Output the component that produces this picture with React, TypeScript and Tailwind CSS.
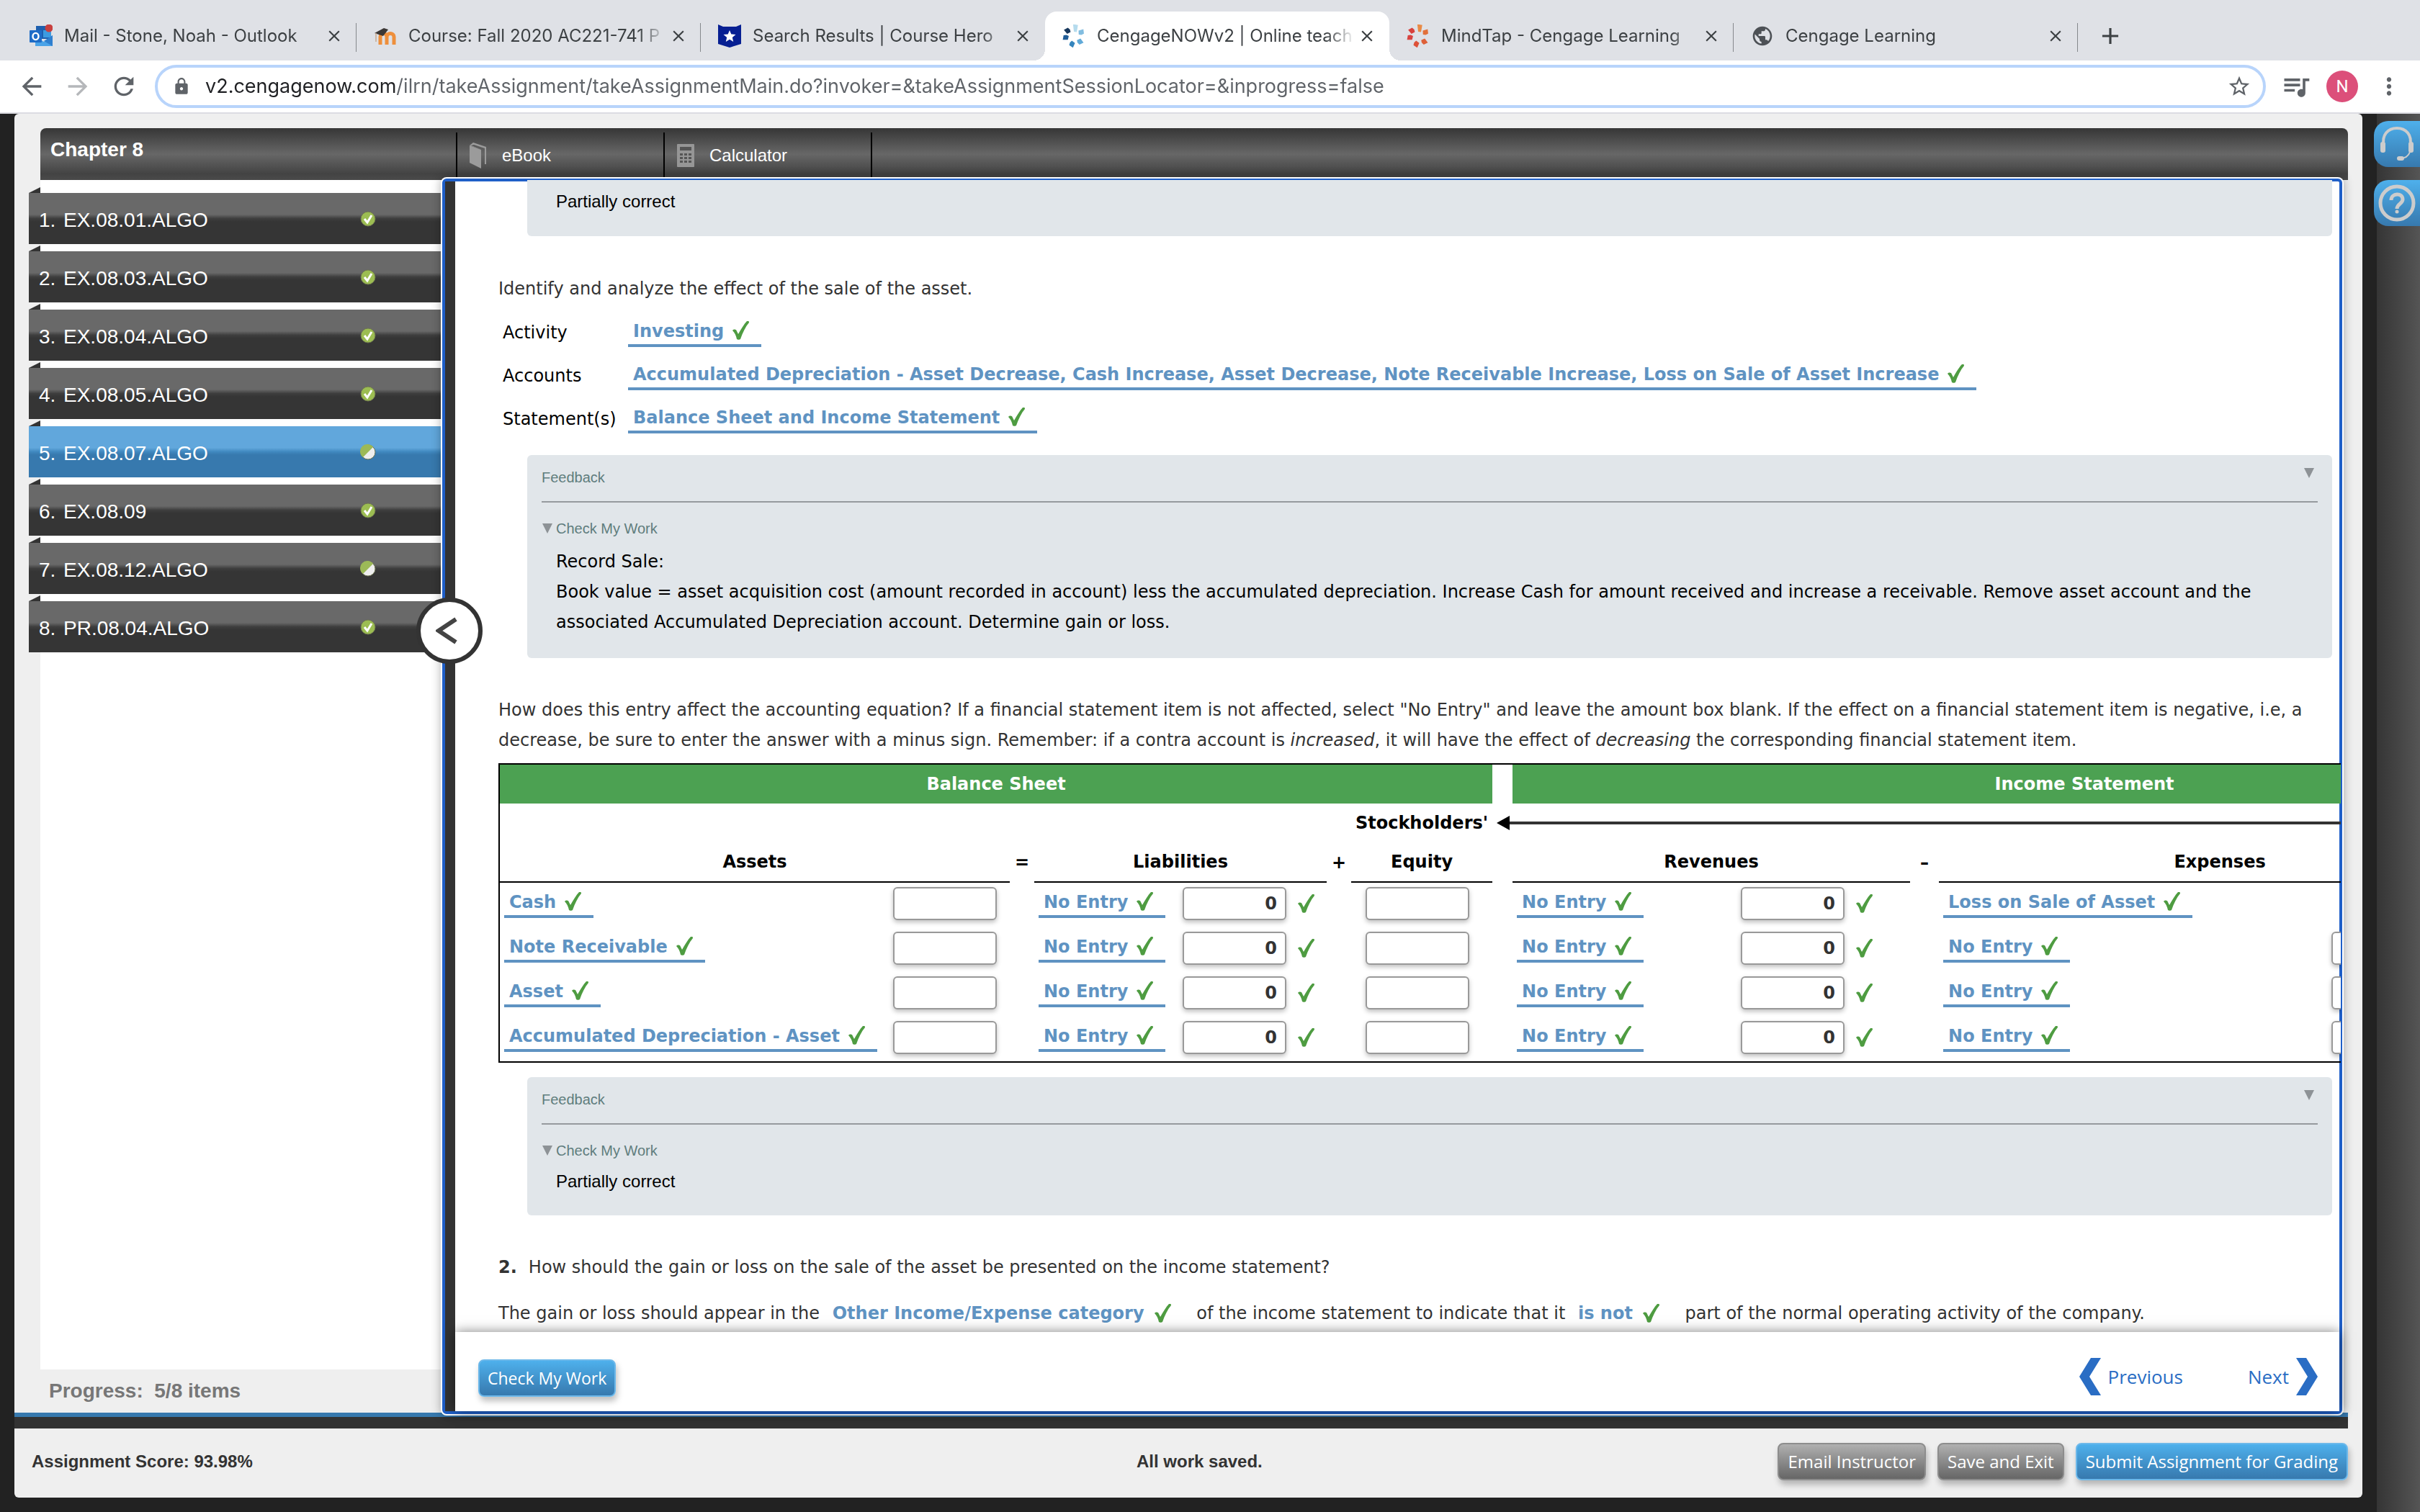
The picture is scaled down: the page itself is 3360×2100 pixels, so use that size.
import type { ReactNode } from "react";
import {
  MdAdd,
  MdArrowBack,
  MdArrowForward,
  MdClose,
  MdLock,
  MdMoreVert,
  MdPublic,
  MdQueueMusic,
  MdRefresh,
  MdStarBorder,
} from "react-icons/md";

/* ---------- icons ---------- */

function OutlookIcon() {
  return (
    <svg viewBox="0 0 32 32" className="w-8 h-8 shrink-0">
      <rect x="9" y="2" width="20" height="18" fill="#1d5fae" />
      <rect x="19" y="8" width="11" height="10" fill="#3d9be0" />
      <path d="M8 17l12 7 12-9v15H8z" fill="#4aa3e8" />
      <path d="M20 23l12-8v15z" fill="#2f7fcf" />
      <rect x="0" y="8" width="17" height="17" rx="1" fill="#1e6cc7" />
      <ellipse cx="8.5" cy="16.5" rx="4" ry="4.6" fill="none" stroke="#fff" strokeWidth="2.4" />
      <circle cx="27" cy="5" r="5.5" fill="#c8403f" />
    </svg>
  );
}

function MoodleIcon() {
  return (
    <svg viewBox="0 0 32 32" className="w-8 h-8 shrink-0">
      <path
        d="M9 28V17c0-6 9-6 9 0v11M18 17c0-6 10-6 10 0v11"
        fill="none"
        stroke="#ee8f3c"
        strokeWidth="5"
      />
      <path d="M1 12L14 5l6 2-7 9z" fill="#3b3735" />
      <path d="M3 12v12" stroke="#c9a88e" strokeWidth="1.5" />
    </svg>
  );
}

function CourseHeroIcon() {
  return (
    <svg viewBox="0 0 32 32" className="w-8 h-8 shrink-0">
      <path d="M0 0l7 3h18l7-3v27l-16 5L0 27z" fill="#071f92" />
      <path
        d="M16 8l2.300 5.400 6.200.500-4.700 4 1.400 6-5.200-3.200L10.800 24l1.400-6-4.700-4 6.200-.600z"
        fill="#fff"
      />
    </svg>
  );
}

function CengageIcon({ colors }: { colors: string[] }) {
  const angles = [10, 65, 135, 195, 262, 312];
  return (
    <svg viewBox="0 0 32 32" className="w-8 h-8 shrink-0">
      {angles.map((angle, i) => (
        <path
          key={angle}
          d={i === 0 ? "M12 0h7v10h-4z" : "M13 0l6 2v4l-2 3-5-2z"}
          fill={colors[i]}
          transform={`rotate(${angle} 16 16)`}
        />
      ))}
    </svg>
  );
}

function BookIcon() {
  return (
    <svg viewBox="0 0 26 38" className="w-[26px] h-[38px]">
      <path d="M1 5l16 6v26L1 29z" fill="#9b9b9b" />
      <path d="M1 5l5-4 18 6v24h-2V9L7 4 3 5l15 6" fill="#9b9b9b" />
    </svg>
  );
}

function CalculatorIcon() {
  return (
    <svg viewBox="0 0 26 34" className="w-[26px] h-[34px]">
      <rect x="1" y="1" width="24" height="32" rx="1" fill="#969696" />
      <rect x="5" y="5" width="16" height="5" fill="#555" />
      {[14, 19, 24].map((y) =>
        [5, 11, 17].map((x) => <rect key={`${x}-${y}`} x={x} y={y} width="4" height="3" fill="#555" />)
      )}
    </svg>
  );
}

function Check() {
  return (
    <svg viewBox="0 0 23 26" className="w-[23px] h-[26px] shrink-0">
      <path d="M0 13c2-2 5-2 6 1l2 4C12 11 16 4 20 0c2-1 3 0 3 2-5 6-9 14-12 23-1 1-4 1-5 0C5 20 3 16 0 13z" fill="#4e9c41" />
    </svg>
  );
}

function StatusDot({ partial }: { partial?: boolean }) {
  return (
    <svg viewBox="0 0 22 22" className="w-[22px] h-[22px]">
      <circle cx="11" cy="11" r="10" fill={partial ? "#eee" : "#9cbd52"} stroke="#6d7450" strokeWidth="1" />
      {partial ? (
        <path d="M18 4A10 10 0 1 0 4 18z" fill="#9cb957" />
      ) : (
        <path d="M6 11l4 5 6-10" fill="none" stroke="#fff" strokeWidth="3" />
      )}
    </svg>
  );
}

function Caret() {
  return (
    <svg viewBox="0 0 16 14" className="w-4 h-[14px]">
      <path d="M1 0h14L8 14z" fill="#8d9296" />
    </svg>
  );
}

function Chevron({ flip }: { flip?: boolean }) {
  return (
    <svg viewBox="0 0 30 52" className={flip ? "w-[30px] h-[52px] rotate-180" : "w-[30px] h-[52px]"}>
      <path d="M16 0h14L14 26l16 26H16L0 26z" fill="#2a6dc4" />
    </svg>
  );
}

/* ---------- browser chrome ---------- */

const BLUES = ["#b5dbed", "#82bde0", "#61aad8", "#3585bd", "#1f5c97", "#17375c"];
const REDS = ["#e98a45", "#e2703a", "#de6038", "#dd5138", "#d84440", "#d8413c"];

const tabs = [
  { title: "Mail - Stone, Noah - Outlook", icon: <OutlookIcon /> },
  { title: "Course: Fall 2020 AC221-741 P", icon: <MoodleIcon /> },
  { title: "Search Results | Course Hero", icon: <CourseHeroIcon /> },
  { title: "CengageNOWv2 | Online teach", icon: <CengageIcon colors={BLUES} />, active: true },
  { title: "MindTap - Cengage Learning", icon: <CengageIcon colors={REDS} /> },
  { title: "Cengage Learning", icon: <MdPublic className="w-8 h-8 shrink-0 text-[#4d5156]" /> },
];

function TabStrip() {
  return (
    <div className="flex items-end h-[84px] bg-[#dfe1e6] pl-[17px] font-['Inter',sans-serif] text-[24px] text-[#3c4043]">
      {tabs.map((tab, i) => {
        const divider = !tab.active && !tabs[i + 1]?.active;
        return (
          <div
            key={tab.title}
            className={`relative flex items-center w-[478px] h-[68px] pl-6 pr-[18px] ${
              tab.active ? "bg-white rounded-t-2xl" : ""
            }`}
          >
            {tab.active && (
              <>
                <span className="absolute bottom-0 -left-4 w-4 h-4 bg-[radial-gradient(circle_at_0_0,#dfe1e6_16px,#fff_16px)]" />
                <span className="absolute bottom-0 -right-4 w-4 h-4 bg-[radial-gradient(circle_at_100%_0,#dfe1e6_16px,#fff_16px)]" />
              </>
            )}
            {tab.icon}
            <span className="flex-1 min-w-0 ml-4 overflow-hidden whitespace-nowrap [mask-image:linear-gradient(90deg,#000_88%,transparent_99%)]">
              {tab.title}
            </span>
            <button type="button" aria-label="Close tab">
              <MdClose className="w-[26px] h-[26px]" />
            </button>
            {divider && <span className="absolute right-0 top-4 w-px h-10 bg-[#85888c]" />}
          </div>
        );
      })}
      <button type="button" aria-label="New tab" className="flex items-center h-[68px] ml-[26px]">
        <MdAdd className="w-[38px] h-[38px]" />
      </button>
    </div>
  );
}

function Toolbar() {
  return (
    <div className="flex items-center h-[74px] bg-white border-b-2 border-[#dcdce2] pl-6 pr-6 text-[#5f6368]">
      <button type="button" aria-label="Back">
        <MdArrowBack className="w-10 h-10" />
      </button>
      <button type="button" aria-label="Forward" className="ml-6 text-[#b5b7ba]">
        <MdArrowForward className="w-10 h-10" />
      </button>
      <button type="button" aria-label="Reload" className="ml-6">
        <MdRefresh className="w-10 h-10" />
      </button>
      <div className="flex flex-1 items-center h-[60px] ml-[23px] border-4 border-[#b8d4fb] rounded-full pl-5 pr-4">
        <MdLock className="w-[26px] h-[26px]" />
        <input
          type="text"
          aria-label="Address"
          readOnly
          value="v2.cengagenow.com/ilrn/takeAssignment/takeAssignmentMain.do?invoker=&takeAssignmentSessionLocator=&inprogress=false"
          className="flex-1 ml-5 h-[40px] outline-none font-['Inter',sans-serif] text-[27px] text-transparent bg-clip-text bg-[linear-gradient(90deg,#202124_264px,#5f6368_264px)]"
        />
        <button type="button" aria-label="Bookmark">
          <MdStarBorder className="w-[34px] h-[34px]" />
        </button>
      </div>
      <button type="button" aria-label="Media" className="ml-5">
        <MdQueueMusic className="w-11 h-11" />
      </button>
      <span className="flex items-center justify-center w-11 h-11 ml-5 rounded-full bg-[#dc4f7a] font-['Roboto',sans-serif] text-[24px] text-white">
        N
      </span>
      <button type="button" aria-label="Menu" className="ml-6">
        <MdMoreVert className="w-[38px] h-[38px]" />
      </button>
    </div>
  );
}

/* ---------- sidebar ---------- */

const items = [
  { name: "EX.08.01.ALGO" },
  { name: "EX.08.03.ALGO" },
  { name: "EX.08.04.ALGO" },
  { name: "EX.08.05.ALGO" },
  { name: "EX.08.07.ALGO", partial: true, current: true },
  { name: "EX.08.09" },
  { name: "EX.08.12.ALGO", partial: true },
  { name: "PR.08.04.ALGO" },
];

function Sidebar() {
  return (
    <aside className="flex flex-col w-[594px] shrink-0">
      <div className="flex-1 ml-9 bg-white pt-2">
        <ul className="-ml-4 mr-[2px]">
          {items.map((item, i) => (
            <li key={item.name} className="pt-[2px]">
              <svg viewBox="0 0 16 8" className="block w-4 h-2">
                <path d="M16 0v8H0z" fill="#333" />
              </svg>
              <a
                href="#"
                className={`flex items-center h-[71px] pl-[14px] pr-[90px] text-[28px] text-white ${
                  item.current
                    ? "bg-[linear-gradient(180deg,#61a7dc_42%,#4088bf_50%,#3779ae_56%)]"
                    : "bg-[linear-gradient(180deg,#696969_42%,#3e3e3e_50%,#353535_56%)]"
                }`}
              >
                <span className="w-[34px] pt-1">{i + 1}.</span>
                <span className="flex-1 pt-1">{item.name}</span>
                <StatusDot partial={item.partial} />
              </a>
            </li>
          ))}
        </ul>
      </div>
      <p className="flex items-center h-[60px] pl-12 text-[28px] font-bold text-[#777] whitespace-pre">
        {"Progress:  5/8 items"}
      </p>
    </aside>
  );
}

/* ---------- question ---------- */

function Answer({ children }: { children: ReactNode }) {
  return (
    <a
      href="#"
      className="inline-flex h-9 border-b-4 border-[#5f93c2] pl-[7px] pr-[17px] gap-3 text-[24px] leading-[28px] font-bold text-[#5f93c2] whitespace-nowrap"
    >
      {children}
      <Check />
    </a>
  );
}

function InlineAnswer({ children }: { children: ReactNode }) {
  return (
    <a href="#" className="inline-flex items-center gap-[14px] ml-[10px] mr-7 font-bold text-[#5f93c2]">
      {children}
      <Check />
    </a>
  );
}

function Feedback({ children }: { children: ReactNode }) {
  return (
    <section className="ml-10 mr-3 px-5 pb-[29px] rounded-md bg-[#e1e6ea] font-['Liberation_Sans',sans-serif]">
      <div className="flex justify-between h-[66px] pt-[18px] pr-1 border-b-2 border-[#969a9e] text-[20px] leading-[26px] text-[#5f7d7d]">
        Feedback
        <Caret />
      </div>
      <div className="flex items-center h-[61px] pt-[10px] gap-1 text-[20px] text-[#5f7d7d]">
        <Caret />
        Check My Work
      </div>
      <div className="pl-5 text-[24px] text-black">{children}</div>
    </section>
  );
}

function Amount({ value, label }: { value?: string; label: string }) {
  return (
    <span className="flex items-center gap-4 mb-1">
      <input
        type="text"
        aria-label={label}
        defaultValue={value}
        className="w-[144px] h-[46px] pr-[11px] border-2 border-[#999] rounded-md bg-white shadow-[0_3px_6px_rgba(0,0,0,0.25)] text-right font-bold text-[#333]"
      />
      {value && <Check />}
    </span>
  );
}

const rows = [
  { asset: "Cash", expense: "Loss on Sale of Asset" },
  { asset: "Note Receivable", expense: "No Entry" },
  { asset: "Asset", expense: "No Entry" },
  { asset: "Accumulated Depreciation - Asset", expense: "No Entry" },
];

function EquationTable() {
  return (
    <table className="w-[2998px] table-fixed border-2 border-black border-separate border-spacing-0 mt-[11px] text-[24px] text-black">
      <colgroup>
        <col className="w-[708px]" />
        <col className="w-[34px]" />
        <col className="w-[406px]" />
        <col className="w-[34px]" />
        <col className="w-[196px]" />
        <col className="w-[28px]" />
        <col className="w-[552px]" />
        <col className="w-[40px]" />
        <col className="w-[780px]" />
        <col />
      </colgroup>
      <thead>
        <tr className="h-[54px] text-white">
          <th colSpan={5} className="bg-[#4ca152]">Balance Sheet</th>
          <th />
          <th colSpan={4} className="bg-[#4ca152]">Income Statement</th>
        </tr>
        <tr className="h-[54px]">
          <th colSpan={4} />
          <th>Stockholders'</th>
          <th colSpan={5}>
            <div className="flex items-center pl-[6px]">
              <svg viewBox="0 0 18 20" className="w-[18px] h-5">
                <path d="M0 10L18 0v20z" fill="#000" />
              </svg>
              <span className="flex-1 h-1 bg-[#333]" />
            </div>
          </th>
        </tr>
        <tr className="h-[56px]">
          <th className="border-b-2">Assets</th>
          <th>=</th>
          <th className="border-b-2">Liabilities</th>
          <th>+</th>
          <th className="border-b-2">Equity</th>
          <th />
          <th className="border-b-2">Revenues</th>
          <th>–</th>
          <th className="border-b-2">Expenses</th>
          <th />
        </tr>
      </thead>
      <tbody>
        {rows.map((row) => (
          <tr key={row.asset} className="h-[62px]">
            <td>
              <div className="flex items-center justify-between pl-[6px] pr-[18px]">
                <Answer>{row.asset}</Answer>
                <Amount label={`${row.asset} amount`} />
              </div>
            </td>
            <td />
            <td>
              <div className="flex items-center justify-between pl-[6px] pr-[17px]">
                <Answer>No Entry</Answer>
                <Amount label={`${row.asset} liabilities`} value="0" />
              </div>
            </td>
            <td />
            <td>
              <div className="pl-5">
                <Amount label={`${row.asset} equity`} />
              </div>
            </td>
            <td />
            <td>
              <div className="flex items-center justify-between pl-[6px] pr-[52px]">
                <Answer>No Entry</Answer>
                <Amount label={`${row.asset} revenues`} value="0" />
              </div>
            </td>
            <td />
            <td>
              <div className="flex items-center justify-between pl-[6px] pr-[52px]">
                <Answer>{row.expense}</Answer>
                {row.expense === "No Entry" && <Amount label={`${row.asset} expenses`} value="0" />}
              </div>
            </td>
            <td />
          </tr>
        ))}
      </tbody>
    </table>
  );
}

const effects = [
  { label: "Activity", value: "Investing" },
  {
    label: "Accounts",
    value:
      "Accumulated Depreciation - Asset Decrease, Cash Increase, Asset Decrease, Note Receivable Increase, Loss on Sale of Asset Increase",
  },
  { label: "Statement(s)", value: "Balance Sheet and Income Statement" },
];

function Question() {
  return (
    <div className="flex-1 min-h-0 -mt-[2px] -mr-[2px] overflow-hidden pl-[60px] font-['DejaVu_Sans',sans-serif] text-[24px] leading-[42px] text-[#333]">
      <div className="ml-10 mr-3 h-[78px] pl-10 pt-3 rounded-b-md bg-[#e1e6ea] font-['Liberation_Sans',sans-serif] leading-[36px] text-black">
        Partially correct
      </div>

      <p className="mt-[52px]">Identify and analyze the effect of the sale of the asset.</p>
      <dl className="mt-3 text-black">
        {effects.map((effect) => (
          <div key={effect.label} className="flex items-center h-[60px]">
            <dt className="w-[180px] pl-[6px] pb-1">{effect.label}</dt>
            <dd className="flex">
              <Answer>{effect.value}</Answer>
            </dd>
          </div>
        ))}
      </dl>

      <div className="mt-[18px]">
        <Feedback>
          <div className="font-['DejaVu_Sans',sans-serif]">
            <p>Record Sale:</p>
            <p>
              Book value = asset acquisition cost (amount recorded in account) less the accumulated depreciation. Increase
              Cash for amount received and increase a receivable. Remove asset account and the associated Accumulated
              Depreciation account. Determine gain or loss.
            </p>
          </div>
        </Feedback>
      </div>

      <p className="mt-[51px] mr-3">
        How does this entry affect the accounting equation? If a financial statement item is not affected, select "No
        Entry" and leave the amount box blank. If the effect on a financial statement item is negative, i.e, a decrease,
        be sure to enter the answer with a minus sign. Remember: if a contra account is <em>increased</em>, it will have
        the effect of <em>decreasing</em> the corresponding financial statement item.
      </p>
      <EquationTable />

      <div className="mt-5">
        <Feedback>
          <p className="leading-[36px]">Partially correct</p>
        </Feedback>
      </div>

      <p className="mt-[51px]">
        <b className="mr-4">2.</b>
        How should the gain or loss on the sale of the asset be presented on the income statement?
      </p>
      <p className="mt-[22px] whitespace-nowrap">
        The gain or loss should appear in the <InlineAnswer>Other Income/Expense category</InlineAnswer> of the income
        statement to indicate that it <InlineAnswer>is not</InlineAnswer> part of the normal operating activity of the
        company.
      </p>
    </div>
  );
}

function QuestionPane() {
  return (
    <main className="relative z-10 flex flex-1 min-w-0 -my-[2px] mr-2 border-4 border-[#1f5fc8] rounded-md bg-white shadow-[0_0_0_2px_#fff,0_0_14px_2px_rgba(0,0,0,0.3)]">
      <div className="w-[14px] bg-[#333]" />
      <button
        type="button"
        aria-label="Collapse"
        className="absolute z-20 top-[578px] -left-10 flex items-center justify-center w-[92px] h-[92px] pr-2 rounded-full border-[6px] border-[#333] bg-white"
      >
        <svg viewBox="0 0 30 38" className="w-[30px] h-[38px]">
          <path d="M28 3L4 19l24 16" fill="none" stroke="#444" strokeWidth="6" />
        </svg>
      </button>
      <div className="flex flex-1 flex-col min-w-0">
        <Question />
        <div className="relative flex items-start h-[110px] shrink-0 pt-9 pl-8 pr-[30px] bg-white shadow-[0_0_16px_rgba(0,0,0,0.5)] font-['Open_Sans',sans-serif] text-[26px] text-[#2a6dc4]">
          <button
            type="button"
            className="h-[52px] mt-[2px] px-[11px] rounded-lg border-2 border-[#6cb8ea] bg-linear-to-b from-[#4eb0ec] to-[#3779ae] shadow-[2px_6px_8px_rgba(0,0,0,0.25)] text-[23px] text-white"
          >
            Check My Work
          </button>
          <button type="button" className="flex items-center gap-[10px] ml-auto">
            <Chevron />
            Previous
          </button>
          <button type="button" className="flex items-center gap-[10px] ml-[90px]">
            Next
            <Chevron flip />
          </button>
        </div>
      </div>
    </main>
  );
}

/* ---------- page ---------- */

function Header() {
  return (
    <header className="flex h-[72px] ml-9 mr-5 rounded-t-lg bg-[linear-gradient(180deg,#363636,#676767_50%,#434343_88%,#4a4a4a)] text-white">
      <h1 className="w-[577px] pl-[14px] pt-3 text-[28px] leading-[36px] font-bold">Chapter 8</h1>
      <a href="#" className="flex items-center w-[288px] h-16 mt-[6px] pl-4 gap-5 border-l-2 border-black text-[24px]">
        <BookIcon />
        eBook
      </a>
      <a href="#" className="flex items-center w-[290px] h-16 mt-[6px] pl-4 gap-5 border-x-2 border-black text-[24px]">
        <CalculatorIcon />
        Calculator
      </a>
    </header>
  );
}

function Footer() {
  const gray =
    "h-[52px] px-3 rounded-lg border-2 border-[#8d8d8d] bg-linear-to-b from-[#b0b0b0] to-[#666] shadow-[2px_6px_8px_rgba(0,0,0,0.25)]";
  return (
    <footer className="grid grid-cols-[477fr_523fr] items-center h-[96px] pl-6 pr-5 pb-1 text-[24px]">
      <b className="text-[#333]">Assignment Score: 93.98%</b>
      <div className="flex items-center justify-between">
        <b className="text-[#333]">All work saved.</b>
        <div className="flex gap-4 font-['Open_Sans',sans-serif] text-white">
          <button type="button" className={gray}>Email Instructor</button>
          <button type="button" className={gray}>Save and Exit</button>
          <button
            type="button"
            className="h-[52px] px-3 rounded-lg border-2 border-[#6cb8ea] bg-linear-to-b from-[#4eb0ec] to-[#3779ae] shadow-[2px_6px_8px_rgba(0,0,0,0.25)]"
          >
            Submit Assignment for Grading
          </button>
        </div>
      </div>
    </footer>
  );
}

function HelpRail() {
  const button =
    "flex items-center justify-center w-16 h-16 -ml-1 rounded-l-[20px] bg-linear-to-b from-[#4eb0ec] to-[#3779ae]";
  return (
    <nav className="flex flex-col gap-[18px] w-[60px] ml-5 pt-[10px] bg-linear-to-r from-[#353535] to-[#555]">
      <button type="button" aria-label="Support" className={button}>
        <svg viewBox="0 0 50 50" className="w-[50px] h-[50px]" fill="none" stroke="#ccc">
          <path d="M7 28C3 12 13 3 25 3s22 9 18 25" strokeWidth="4" />
          <path d="M43 36c-2 6-6 9-14 9" strokeWidth="2" />
          <rect x="2" y="22" width="7" height="15" rx="3" fill="#ccc" stroke="none" />
          <rect x="41" y="22" width="7" height="15" rx="3" fill="#ccc" stroke="none" />
          <rect x="25" y="42" width="10" height="6" rx="3" fill="#ccc" stroke="none" />
        </svg>
      </button>
      <button type="button" aria-label="Help" className={button}>
        <svg viewBox="0 0 52 52" className="w-[52px] h-[52px]" fill="none" stroke="#ccc">
          <circle cx="26" cy="26" r="23" strokeWidth="5" />
          <path d="M18 22c0-10 16-11 16-1 0 6-8 6-8 13" strokeWidth="5" />
          <circle cx="26" cy="38" r="2.500" fill="#ccc" stroke="none" />
        </svg>
      </button>
    </nav>
  );
}

export default function App() {
  return (
    <div className="flex flex-col h-screen overflow-hidden bg-[#222] font-['Liberation_Sans',sans-serif]">
      <TabStrip />
      <Toolbar />
      <div className="flex flex-1 min-h-0">
        <div className="flex flex-1 flex-col min-w-0 ml-5 mb-5 pt-5 rounded-md bg-[#efefef]">
          <Header />
          <div className="flex flex-1 min-h-0 mr-5">
            <Sidebar />
            <QuestionPane />
          </div>
          <div className="h-[22px] shrink-0 mr-5 border-t-[6px] border-[#3779ae] bg-[#333]" />
          <Footer />
        </div>
        <HelpRail />
      </div>
    </div>
  );
}
